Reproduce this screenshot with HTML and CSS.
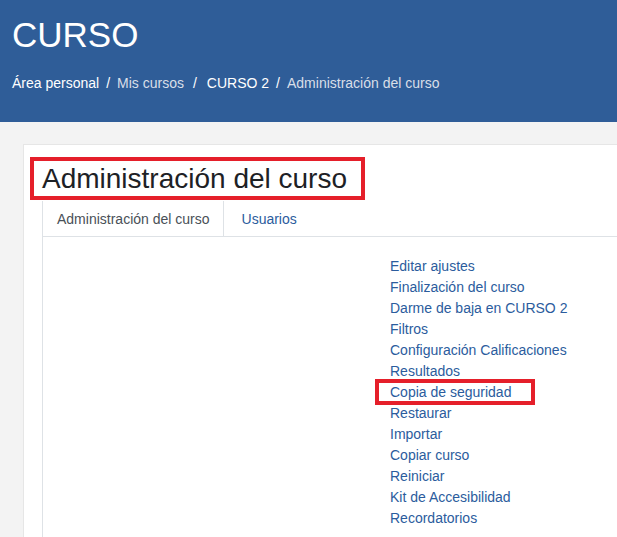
FILE: index.html
```html
<!DOCTYPE html>
<html lang="es">
<head>
<meta charset="utf-8">
<title>CURSO: Administración del curso</title>
<link rel="stylesheet" href="styles.css">
</head>
<body>
<header class="page-header">
  <h1 class="course-title">CURSO</h1>
  <nav class="breadcrumb">
    <a class="crumb crumb-strong" href="#">Área personal</a>
    <span class="sep">/</span>
    <a class="crumb crumb-muted" href="#">Mis cursos</a>
    <span class="sep sep-wide">/</span>
    <a class="crumb crumb-strong" href="#">CURSO 2</a>
    <span class="sep">/</span>
    <span class="crumb crumb-muted">Administración del curso</span>
  </nav>
</header>
<main class="main">
  <section class="card">
    <h2 class="page-title">Administración del curso</h2>
    <div class="tabs">
      <div class="tab tab-active">Administración del curso</div>
      <a class="tab tab-link" href="#">Usuarios</a>
      <div class="tab-fill"></div>
    </div>
    <div class="tab-content">
      <ul class="admin-list">
        <li><a href="#">Editar ajustes</a></li>
        <li><a href="#">Finalización del curso</a></li>
        <li><a href="#">Darme de baja en CURSO 2</a></li>
        <li><a href="#">Filtros</a></li>
        <li><a href="#">Configuración Calificaciones</a></li>
        <li><a href="#">Resultados</a></li>
        <li class="highlighted"><a href="#">Copia de seguridad</a><span class="highlight-box"></span></li>
        <li><a href="#">Restaurar</a></li>
        <li><a href="#">Importar</a></li>
        <li><a href="#">Copiar curso</a></li>
        <li><a href="#">Reiniciar</a></li>
        <li><a href="#">Kit de Accesibilidad</a></li>
        <li><a href="#">Recordatorios</a></li>
      </ul>
    </div>
  </section>
</main>
</body>
</html>
```

FILE: styles.css
```css
html, body {
  margin: 0;
  padding: 0;
  overflow: hidden;
}
body {
  background: #f3f3f3;
  font-family: "Liberation Sans", Arial, sans-serif;
  color: #1d2125;
  width: 617px;
  height: 537px;
}
a { text-decoration: none; }

.page-header {
  background: #2f5d98;
  height: 122px;
  box-sizing: border-box;
  padding: 15px 0 0 12px;
}
.course-title {
  margin: 0;
  font-size: 35px;
  font-weight: normal;
  line-height: 40px;
  color: #ffffff;
}
.breadcrumb {
  margin-top: 17px;
  font-size: 14px;
  line-height: 22px;
  display: flex;
  white-space: nowrap;
}
.crumb-strong { color: #ffffff; }
.crumb-muted { color: #d9dfe8; }
.sep {
  color: #ffffff;
  padding: 0 7px;
}
.sep-wide { padding: 0 10px 0 9px; }

.main {
  padding: 22px 0 0 23px;
}
.card {
  background: #ffffff;
  border: 1px solid #e6e6e6;
  border-right: none;
  margin-right: -30px;
  padding: 12px 0 0 6px;
  min-height: 420px;
}
.page-title {
  margin: 0;
  display: inline-block;
  border: 4px solid #e51f2a;
  padding: 0 14px 0 8px;
  font-size: 28px;
  font-weight: normal;
  line-height: 35px;
  color: #1d2125;
}
.tabs {
  display: flex;
  margin-left: 12px;
  height: 36px;
  margin-top: 1px;
}
.tab {
  font-size: 14px;
  line-height: 37px;
  white-space: nowrap;
  box-sizing: border-box;
  border-bottom: 1px solid #dee2e6;
}
.tab-active {
  color: #495057;
  border-left: 1px solid #dee2e6;
  border-right: 1px solid #dee2e6;
  padding: 0 13px 0 14px;
}
.tab-link {
  color: #2b5c9d;
  padding: 0 18px;
}
.tab-fill {
  flex: 1;
  border-bottom: 1px solid #dee2e6;
}
.tab-content {
  margin-left: 12px;
  border-left: 1px solid #dee2e6;
  padding: 19px 0 0 347px;
  min-height: 320px;
}
.admin-list {
  list-style: none;
  margin: 0;
  padding: 0;
  font-size: 14px;
  line-height: 21px;
}
.admin-list a {
  color: #2b5c9d;
  white-space: nowrap;
}
.highlighted {
  position: relative;
}
.highlight-box {
  position: absolute;
  left: -15px;
  top: -3px;
  width: 160px;
  height: 26px;
  box-sizing: border-box;
  border: 4px solid #e51f2a;
}
```
